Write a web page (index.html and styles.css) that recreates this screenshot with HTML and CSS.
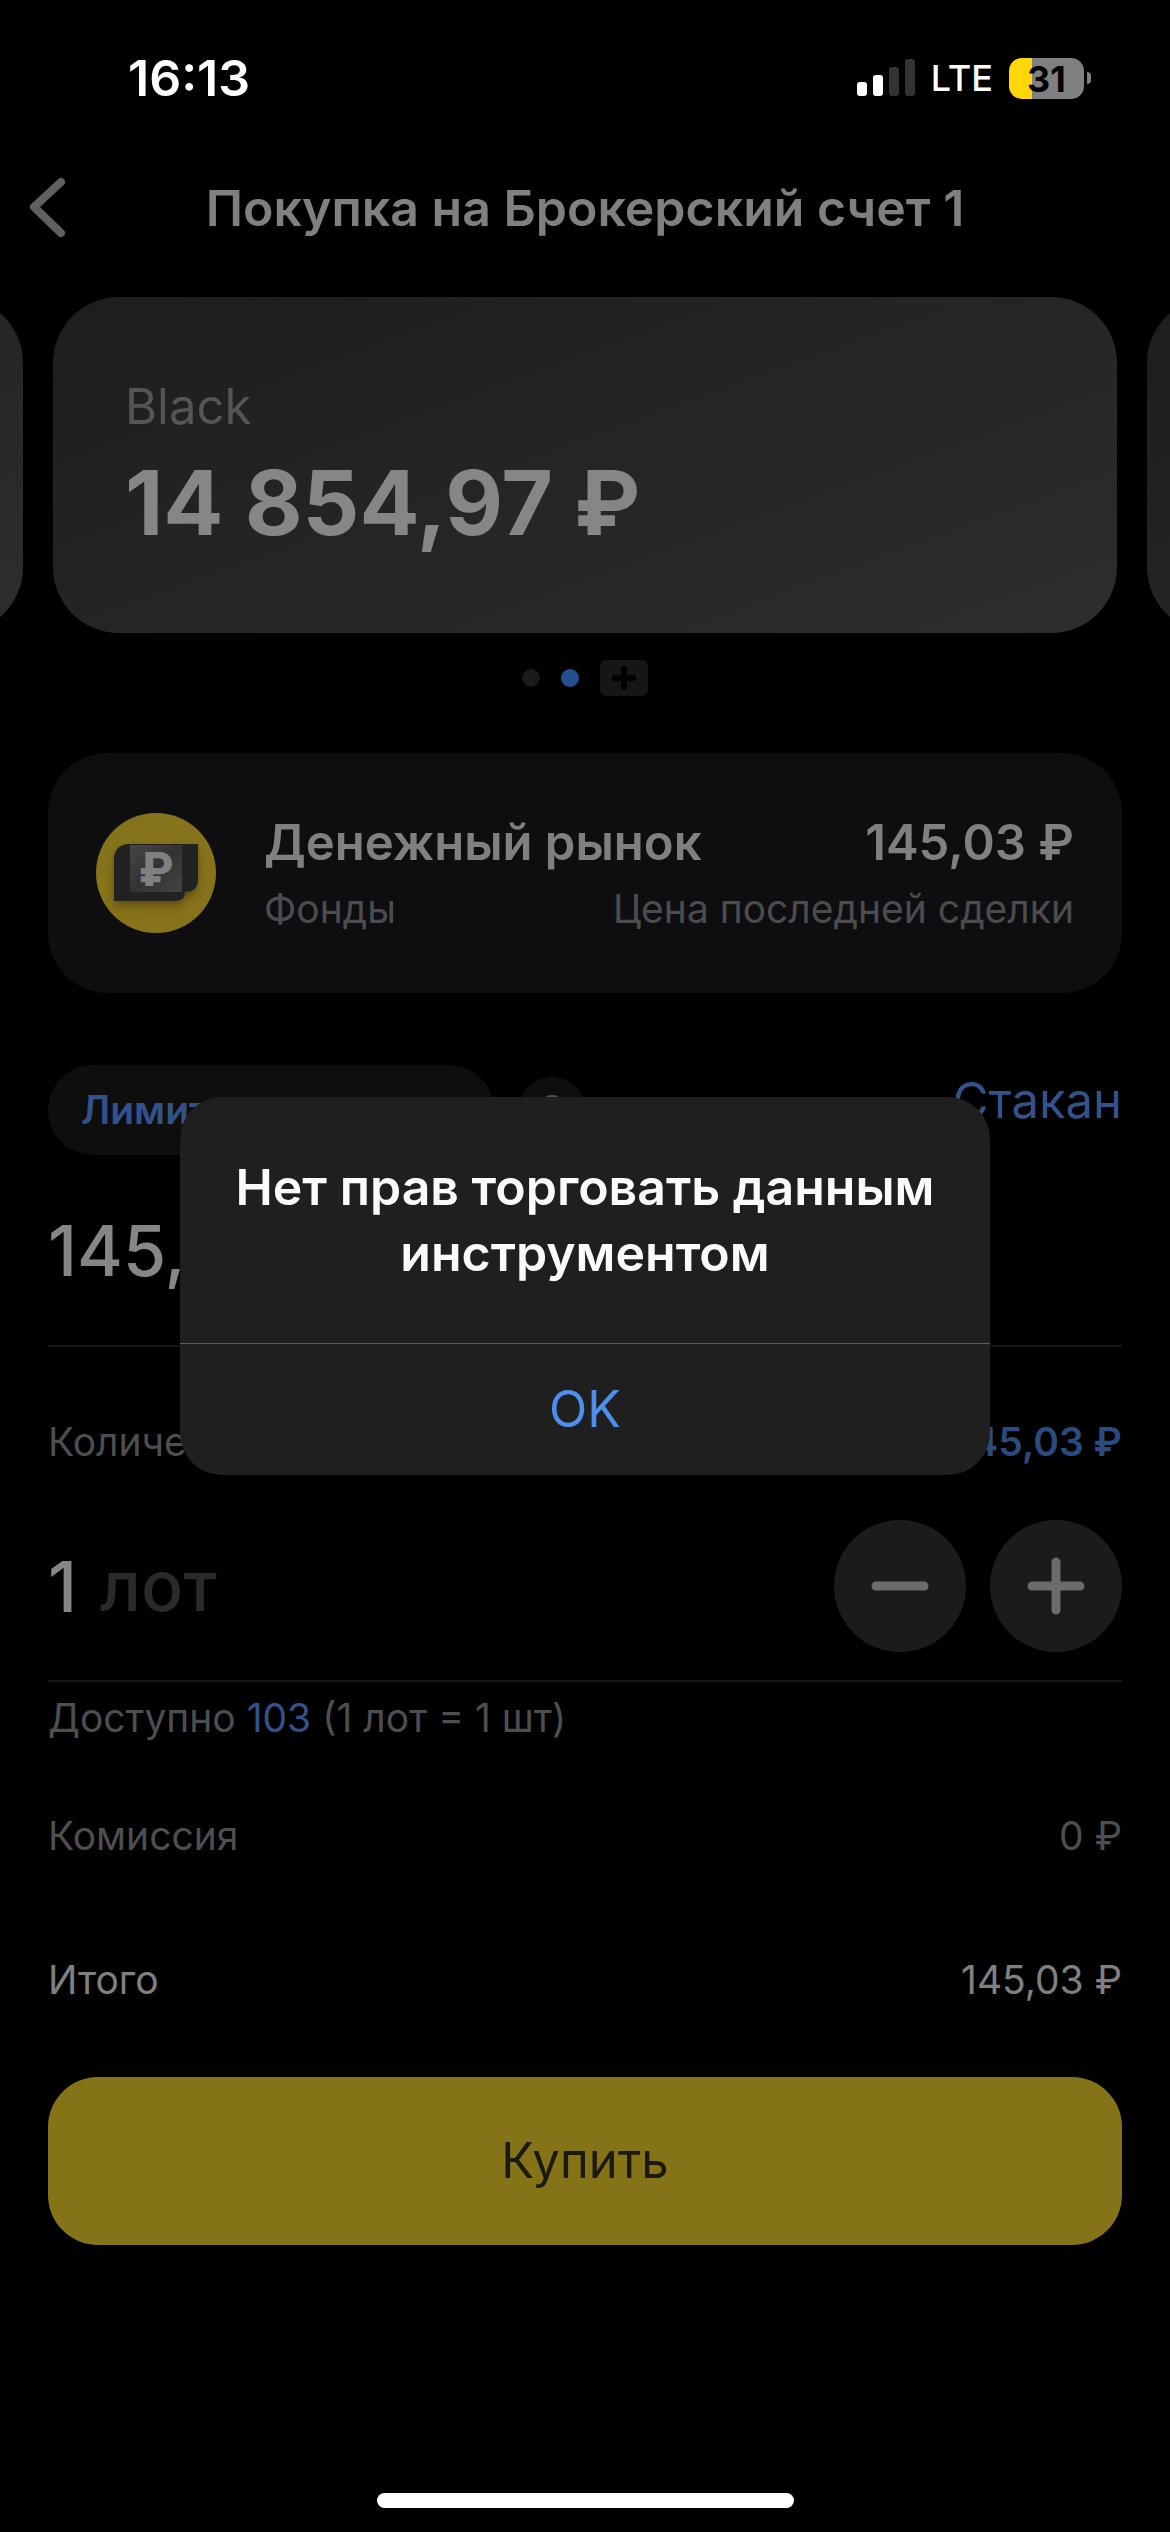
FILE: index.html
```html
<!DOCTYPE html>
<html lang="ru">
<head>
    <meta charset="UTF-8">
    <meta name="viewport" content="width=device-width, initial-scale=1.0">
    <title>Покупка на Брокерский счет 1</title>
    <link rel="stylesheet" href="styles.css">
</head>
<body>
    <div class="page">
        <div class="status-bar">
            <span class="clock">16:13</span>
            <div class="status-icons">
                <svg class="signal" width="58" height="38" viewBox="0 0 58 38">
                    <rect x="0" y="23" width="10" height="14" rx="3" fill="#fff"/>
                    <rect x="16" y="16" width="10" height="21" rx="3" fill="#fff"/>
                    <rect x="32" y="8" width="10" height="29" rx="3" fill="#333"/>
                    <rect x="48" y="0" width="10" height="37" rx="3" fill="#333"/>
                </svg>
                <span class="network">LTE</span>
                <div class="battery"><span class="battery-level">31</span></div>
            </div>
        </div>

        <header class="nav">
            <button class="back" type="button" aria-label="Назад">
                <svg width="38" height="62" viewBox="0 0 38 62">
                    <path d="M33 5L6 30l27 26" fill="none" stroke="#606060" stroke-width="8" stroke-linecap="round" stroke-linejoin="round"/>
                </svg>
            </button>
            <h1>Покупка на Брокерский счет 1</h1>
        </header>

        <section class="accounts">
            <div class="account"></div>
            <div class="account">
                <p class="account-name">Black</p>
                <p class="account-sum">14 854,97 ₽</p>
            </div>
            <div class="account"></div>
        </section>
        <div class="dots">
            <span class="dot"></span>
            <span class="dot active"></span>
            <button class="dot-add" type="button" aria-label="Добавить счет">
                <svg width="24" height="24" viewBox="0 0 24 24">
                    <path d="M12 3v18M3 12h18" stroke="#000" stroke-width="6" stroke-linecap="round"/>
                </svg>
            </button>
        </div>

        <main>
            <section class="asset">
                <svg class="asset-logo" width="120" height="120" viewBox="0 0 120 120">
                    <defs>
                        <linearGradient id="coin" x1="0" y1="0" x2="1" y2="1">
                            <stop offset="0" stop-color="#80701f"/>
                            <stop offset="0.3" stop-color="#87751a"/>
                            <stop offset="1" stop-color="#86721a"/>
                        </linearGradient>
                        <linearGradient id="note" x1="0" y1="0" x2="1" y2="1">
                            <stop offset="0" stop-color="#464646"/>
                            <stop offset="0.5" stop-color="#333"/>
                            <stop offset="1" stop-color="#434343"/>
                        </linearGradient>
                        <filter id="shade" x="-20%" y="-20%" width="140%" height="150%">
                            <feDropShadow dx="0" dy="5" stdDeviation="4" flood-color="#3a2c00" flood-opacity="0.5"/>
                        </filter>
                    </defs>
                    <circle cx="60" cy="60" r="60" fill="url(#coin)"/>
                    <path d="M32 31h70v36q0 12-13 12q0 9-10 9H18V45q1-13 14-14z" fill="#222" filter="url(#shade)"/>
                    <rect x="34" y="32" width="52" height="47" fill="url(#note)"/>
                    <text class="asset-sign" x="60" y="73" text-anchor="middle">₽</text>
                </svg>
                <div class="asset-info">
                    <div class="asset-line">
                        <span>Денежный рынок</span>
                        <span>145,03 ₽</span>
                    </div>
                    <div class="asset-line asset-note">
                        <span>Фонды</span>
                        <span>Цена последней сделки</span>
                    </div>
                </div>
            </section>

            <form class="order">
                <div class="order-type">
                    <select aria-label="Тип заявки">
                        <option>Лимитная заявка</option>
                    </select>
                    <button class="help" type="button" aria-label="Справка">?</button>
                    <a class="book" href="#">Стакан</a>
                </div>

                <div class="price">
                    <input type="text" aria-label="Цена" value="145,03 ₽">
                </div>

                <div class="row qty-head">
                    <label for="qty">Количество</label>
                    <span class="qty-sum">145,03 ₽</span>
                </div>
                <div class="qty">
                    <input type="text" id="qty" value="1">
                    <span class="unit">лот</span>
                    <button class="step" type="button" aria-label="Меньше">
                        <svg width="58" height="58" viewBox="0 0 58 58">
                            <path d="M5 29h48" stroke="#6b6b6b" stroke-width="9" stroke-linecap="round"/>
                        </svg>
                    </button>
                    <button class="step" type="button" aria-label="Больше">
                        <svg width="58" height="58" viewBox="0 0 58 58">
                            <path d="M5 29h48M29 5v48" stroke="#6b6b6b" stroke-width="9" stroke-linecap="round"/>
                        </svg>
                    </button>
                </div>
                <p class="available">Доступно <a href="#">103</a> (1 лот = 1 шт)</p>

                <div class="row fee">
                    <span>Комиссия</span>
                    <span>0 ₽</span>
                </div>
                <div class="row total">
                    <span>Итого</span>
                    <span>145,03 ₽</span>
                </div>

                <button class="buy" type="submit">Купить</button>
            </form>
        </main>

        <div class="home-bar"></div>
    </div>

    <div class="overlay">
        <div class="alert" role="alertdialog" aria-labelledby="alert-title">
            <h2 id="alert-title">Нет прав торговать данным инструментом</h2>
            <button type="button">OK</button>
        </div>
    </div>
</body>
</html>
```
FILE: styles.css
```css
* {
    box-sizing: border-box;
    margin: 0;
    padding: 0;
}

body {
    font-family: Inter, "Liberation Sans", sans-serif;
    font-size: 39px;
    line-height: 60px;
    background-color: #000;
    color: #4e4e50;
}

button, input, select {
    font: inherit;
    color: inherit;
    background: none;
    border: none;
}

button {
    cursor: pointer;
}

a {
    color: #33518a;
    text-decoration: none;
}

svg {
    display: block;
}

.page {
    display: flex;
    flex-direction: column;
    min-height: 100vh;
    padding-bottom: 24px;
}

/* Status bar */
.status-bar {
    display: flex;
    align-items: center;
    justify-content: space-between;
    height: 148px;
    padding: 8px 86px 0 128px;
    color: #fff;
}

.clock {
    font-size: 50px;
    font-weight: 600;
}

.status-icons {
    display: flex;
    align-items: center;
}

.network {
    margin: 0 16px;
    font-size: 36px;
    font-weight: 500;
}

.battery {
    position: relative;
    width: 75px;
    height: 41px;
    border-radius: 13px;
    background: linear-gradient(to right, #ffd60a 31%, #808080 31%);
    color: #000;
    font-size: 36px;
    font-weight: 700;
    line-height: 42px;
    text-align: center;
}

.battery::after {
    content: "";
    position: absolute;
    top: 14px;
    right: -7px;
    width: 4px;
    height: 12px;
    border-radius: 0 4px 4px 0;
    background-color: #808080;
}

/* Header */
.nav {
    position: relative;
    display: flex;
    align-items: center;
    justify-content: center;
    height: 120px;
    margin-bottom: 29px;
}

.nav h1 {
    font-size: 50px;
    font-weight: 600;
    color: #808080;
}

.back {
    position: absolute;
    left: 28px;
}

/* Accounts */
.accounts {
    display: flex;
    justify-content: center;
    gap: 30px;
    overflow: hidden;
}

.account {
    flex: 0 0 calc(100% - 106px);
    min-height: 336px;
    padding: 74px 72px 60px;
    border-radius: 66px;
    background: linear-gradient(160deg, #1d1d1d, #2d2d2d);
}

.account-name {
    font-size: 49px;
    line-height: 72px;
    color: #555;
}

.account-sum {
    font-size: 89px;
    font-weight: 700;
    line-height: 120px;
    color: #868686;
}

.dots {
    display: flex;
    align-items: center;
    justify-content: center;
    gap: 21px;
    height: 36px;
    margin: 27px 0 57px;
}

.dot {
    width: 18px;
    height: 18px;
    border-radius: 50%;
    background-color: #1a1a1a;
}

.dot.active {
    background-color: #24508f;
}

.dot-add {
    display: flex;
    align-items: center;
    justify-content: center;
    width: 48px;
    height: 36px;
    border-radius: 6px;
    background-color: #161616;
}

main {
    padding: 0 48px;
}

/* Asset */
.asset {
    display: flex;
    align-items: center;
    gap: 48px;
    min-height: 240px;
    padding: 0 48px;
    border-radius: 60px;
    background-color: #0e0e10;
}

.asset-logo {
    flex-shrink: 0;
}

.asset-sign {
    font-size: 46px;
    font-weight: 800;
    fill: #808080;
}

.asset-info {
    flex: 1;
    padding-top: 6px;
}

.asset-line {
    display: flex;
    justify-content: space-between;
    font-size: 49px;
    font-weight: 600;
    line-height: 66px;
    color: #808082;
}

.asset-note {
    font-size: 39px;
    font-weight: 400;
    color: #4c4c4f;
}

/* Order form */
.order-type {
    display: flex;
    align-items: flex-start;
    margin-top: 72px;
}

.order-type select {
    appearance: none;
    width: 446px;
    height: 90px;
    padding: 0 33px;
    border-radius: 45px;
    background-color: #0e0e0e;
    color: #33518a;
    font-weight: 600;
}

.help {
    width: 66px;
    height: 66px;
    margin: 12px 0 0 25px;
    border-radius: 50%;
    background-color: #0e0e0e;
    font-weight: 600;
}

.book {
    margin-left: auto;
    font-size: 49px;
    line-height: 72px;
}

.price {
    border-bottom: 2px solid #161616;
}

.price input {
    width: 100%;
    height: 190px;
    font-size: 70px;
    font-weight: 500;
    color: #868686;
}

.row {
    display: flex;
    justify-content: space-between;
}

.qty-head {
    margin: 65px 0 48px;
}

.qty-sum {
    font-weight: 600;
    color: #2a4a80;
}

.qty {
    display: flex;
    align-items: center;
    gap: 24px;
    padding-bottom: 28px;
    border-bottom: 2px solid #161616;
    font-size: 70px;
    font-weight: 500;
}

.qty input {
    width: 28px;
    color: #868686;
}

.unit {
    flex: 1;
    color: #2a2a2a;
}

.step {
    display: flex;
    align-items: center;
    justify-content: center;
    width: 132px;
    height: 132px;
    border-radius: 50%;
    background-color: #1b1b1b;
}

.available {
    margin-top: 6px;
}

.fee {
    margin-top: 58px;
}

.total {
    margin-top: 84px;
    color: #808080;
}

.buy {
    width: 100%;
    height: 168px;
    margin-top: 67px;
    border-radius: 50px;
    background-color: #857317;
    color: #1b1a0c;
    font-size: 49px;
}

.home-bar {
    width: 417px;
    height: 15px;
    margin: auto auto 0;
    border-radius: 8px;
    background-color: #fff;
}

/* Alert */
.overlay {
    position: fixed;
    inset: 0;
    display: flex;
    align-items: center;
    justify-content: center;
    padding: 141px 24px 102px;
}

.alert {
    width: 810px;
    border-radius: 42px;
    background-color: #1f1f1f;
    overflow: hidden;
    text-align: center;
}

.alert h2 {
    padding: 57px 48px;
    font-size: 50px;
    font-weight: 600;
    line-height: 66px;
    color: #fafafa;
}

.alert button {
    width: 100%;
    height: 132px;
    border-top: 1px solid #5c5c5c;
    font-size: 50px;
    color: #4e8fee;
}
```
